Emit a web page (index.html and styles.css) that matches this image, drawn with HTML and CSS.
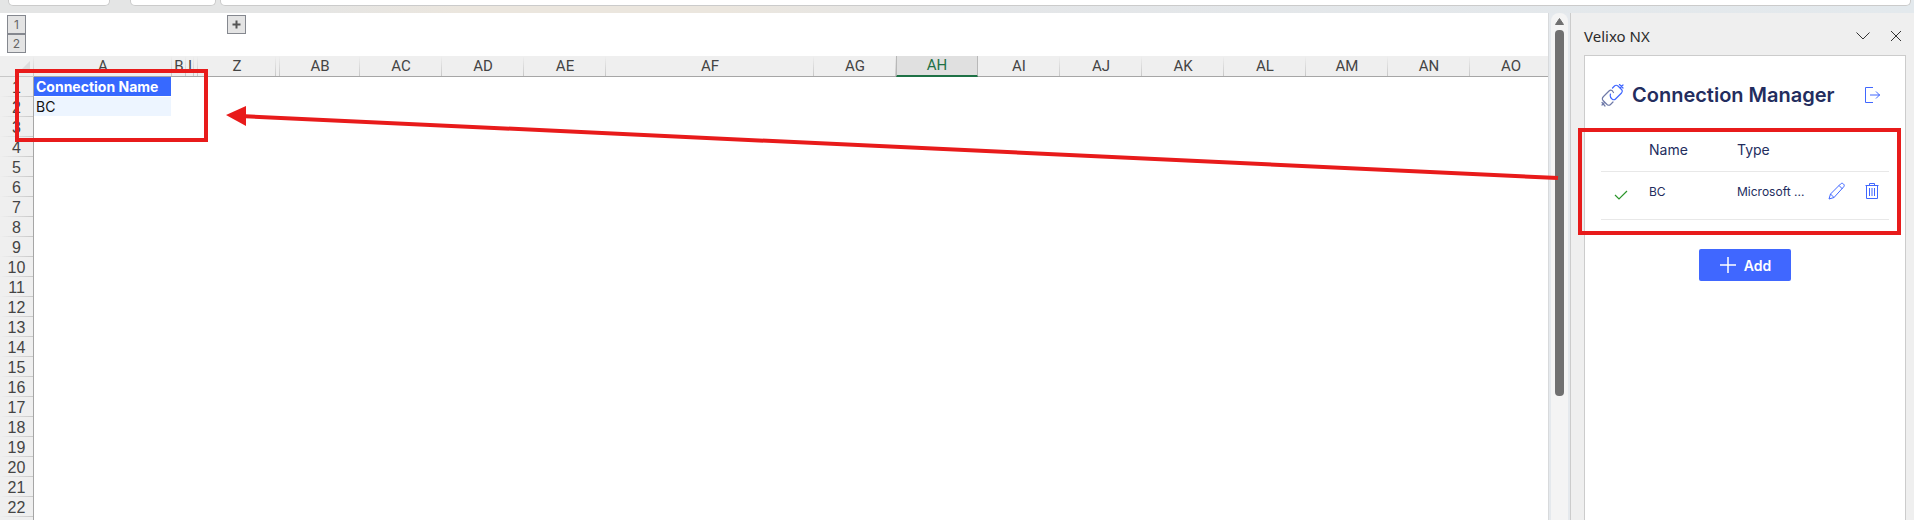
FILE: index.html
```
<!DOCTYPE html>
<html lang="en">
<head>
    <meta charset="UTF-8">
    <meta name="viewport" content="width=device-width, initial-scale=1.0">
    <title>Velixo NX - Connection Manager</title>
    <link rel="stylesheet" href="styles.css">
</head>
<body>
    <!-- bottom edge of the formula bar -->
    <div class="formula-bar">
        <div class="name-box"></div>
        <div class="fx-box"></div>
        <div class="formula-input"></div>
    </div>

    <div class="workspace">
        <main class="sheet">
            <div class="outline">
                <div class="levels">
                    <button>1</button>
                    <button>2</button>
                </div>
                <button class="expand" aria-label="Expand group">
                    <svg width="9" height="9" viewBox="0 0 9 9"><path d="M4.5 0.5v8M0.5 4.5h8" stroke="#555" stroke-width="2"/></svg>
                </button>
            </div>
            <table class="grid">
                <colgroup>
                    <col class="c-head"><col class="c-a"><col class="c-b"><col class="c-i"><col class="c-gap"><col class="c-z"><col class="c-gap"><col class="c-ab">
                    <col class="c-std"><col class="c-std"><col class="c-std"><col class="c-af"><col class="c-std"><col class="c-std"><col class="c-std"><col class="c-std"><col class="c-std"><col class="c-std"><col class="c-std"><col class="c-std"><col class="c-std">
                </colgroup>
                <thead>
                    <tr>
                        <th class="corner"><svg width="10" height="10" viewBox="0 0 10 10"><path d="M10 0v10H0z" fill="#dcdcdc"/></svg></th>
                        <th>A</th><th>B</th><th>I</th><th></th><th>Z</th><th></th><th>AB</th><th>AC</th><th>AD</th><th>AE</th><th>AF</th><th>AG</th><th class="active">AH</th><th>AI</th><th>AJ</th><th>AK</th><th>AL</th><th>AM</th><th>AN</th><th>AO</th>
                    </tr>
                </thead>
                <tbody>
                    <tr><th>1</th><td class="cell-title">Connection Name</td></tr>
                    <tr><th>2</th><td class="cell-value">BC</td></tr>
                    <tr><th>3</th></tr>
                    <tr><th>4</th></tr>
                    <tr><th>5</th></tr>
                    <tr><th>6</th></tr>
                    <tr><th>7</th></tr>
                    <tr><th>8</th></tr>
                    <tr><th>9</th></tr>
                    <tr><th>10</th></tr>
                    <tr><th>11</th></tr>
                    <tr><th>12</th></tr>
                    <tr><th>13</th></tr>
                    <tr><th>14</th></tr>
                    <tr><th>15</th></tr>
                    <tr><th>16</th></tr>
                    <tr><th>17</th></tr>
                    <tr><th>18</th></tr>
                    <tr><th>19</th></tr>
                    <tr><th>20</th></tr>
                    <tr><th>21</th></tr>
                    <tr><th>22</th></tr>
                    <tr><th></th></tr>
                </tbody>
            </table>
        </main>

        <div class="scroll">
            <div class="track">
                <svg width="9" height="7" viewBox="0 0 9 7"><path d="M4.5 0.5L8.5 6.5H0.5z" fill="#707070" stroke="#707070" stroke-linejoin="round"/></svg>
                <div class="thumb"></div>
            </div>
        </div>

        <aside class="pane">
            <div class="pane-header">
                <h2>Velixo NX</h2>
                <button aria-label="Pane options">
                    <svg width="14" height="14" viewBox="0 0 14 14"><path d="M0.5 3.5L7 10l6.5-6.5"/></svg>
                </button>
                <button aria-label="Close">
                    <svg width="12" height="12" viewBox="0 0 12 12"><path d="M1 1l10 10M11 1L1 11"/></svg>
                </button>
            </div>
            <div class="card">
                <div class="card-header">
                    <svg width="23" height="23" viewBox="0 0 23 23" fill="none" stroke-width="1.2" stroke-linecap="round">
                        <g stroke="#6f7aa8">
                            <path d="M12.500 8.500L11 6.500Q9.500 5.500 8 7L2.500 12.500Q.5 14.500 2 16.500L6 20.500Q8 22 9.500 20.500L12 18"/>
                            <path d="M3.500 18.500L1 21M1 18.500L4 22"/>
                        </g>
                        <g stroke="#4067ff">
                            <path d="M9.500 10Q8.500 13 11 15Q13 16.500 14.500 15L20.500 9Q22 7 20.500 5.500L17 2Q15 .5 13.500 2L11.500 4"/>
                            <path d="M19.500 3.500L22 1M18.500 .5L22 4"/>
                        </g>
                    </svg>
                    <h1>Connection Manager</h1>
                    <button aria-label="Sign out">
                        <svg width="16" height="16" viewBox="0 0 16 16"><path d="M8 0.500H0.500v15H8M5 8h10M11 4.500L14.500 8 11 11.500"/></svg>
                    </button>
                </div>
                <table class="connections">
                    <colgroup><col class="k-state"><col class="k-name"><col class="k-type"><col class="k-edit"><col class="k-delete"></colgroup>
                    <thead>
                        <tr><th></th><th>Name</th><th>Type</th><th></th><th></th></tr>
                    </thead>
                    <tbody>
                        <tr>
                            <td class="state"><svg width="14" height="10" viewBox="0 0 14 10"><path d="M1 5l4 4 8-8" fill="none" stroke="#2c962c" stroke-width="1.200"/></svg></td>
                            <td>BC</td>
                            <td>Microsoft ...</td>
                            <td class="action">
                                <button aria-label="Edit">
                                    <svg width="18" height="18" viewBox="0 0 18 18"><path d="M1 17l1.500-5L12.500 2c1-1 2-1 3 0s1 2 0 3L6 15.500zM2.500 12L6 15.500M11 3.500L14.500 7"/></svg>
                                </button>
                            </td>
                            <td class="action">
                                <button aria-label="Delete">
                                    <svg width="14" height="18" viewBox="0 0 14 18"><path d="M0.500 3.500h13M4.500 3.500v-2h5v2M1.500 3.500v13h11v-13M4.500 6v8M7 6v8M9.500 6v8"/></svg>
                                </button>
                            </td>
                        </tr>
                    </tbody>
                </table>
                <button class="add">
                    <svg width="18" height="18" viewBox="0 0 18 18"><path d="M9 1v16M1 9h16" stroke="#fff" stroke-width="1.500"/></svg>
                    Add
                </button>
            </div>
        </aside>
    </div>

    <!-- callouts drawn over the window -->
    <div class="callout callout-cell"></div>
    <div class="callout callout-list"></div>
    <svg class="arrow" width="1340" height="90" viewBox="0 0 1340 90">
        <path d="M20 16L1338 78" stroke="#e81b1b" stroke-width="4"/>
        <path d="M6 15L26 6v20z" fill="#e81b1b"/>
    </svg>
</body>
</html>
```
FILE: styles.css
```
* {
    box-sizing: border-box;
}

body {
    margin: 0;
    height: 100vh;
    display: flex;
    flex-direction: column;
    position: relative;
    overflow: hidden;
    background: #fff;
    font-family: Inter, sans-serif;
}

button {
    padding: 0;
    border: 0;
    background: none;
    font-family: inherit;
    display: flex;
    align-items: center;
    justify-content: center;
}

svg {
    display: block;
}

/* formula bar */
.formula-bar {
    flex: none;
    display: flex;
    height: 13px;
    padding: 0 3px 7px 8px;
    background: linear-gradient(90deg, #e4e5e5 0, #e4e5e5 15%, #ebe6de 24%, #ebe6de 38%, #e4e6e8 50%, #e3e9ed 100%);
}

.formula-bar div {
    background: #fff;
    border: 1px solid #cbcbcb;
    border-top: 0;
    border-radius: 0 0 5px 5px;
}

.name-box {
    width: 102px;
    margin-right: 20px;
}

.fx-box {
    width: 86px;
    margin-right: 4px;
}

.formula-input {
    flex: 1;
}

.workspace {
    flex: 1;
    min-height: 0;
    display: flex;
}

/* worksheet */
.sheet {
    flex: 1;
    min-width: 0;
    overflow: hidden;
}

.outline {
    display: flex;
    align-items: flex-start;
    height: 43px;
    padding: 2px 7px;
    gap: 201px;
}

.outline button {
    width: 19px;
    height: 19px;
    border: 1px solid #85888f;
    background: #e4e4e4;
    color: #666;
    font-size: 12px;
}

.grid {
    width: 1552px;
    table-layout: fixed;
    border-collapse: separate;
    border-spacing: 0;
    color: #444;
}

.grid th,
.grid td {
    height: 20px;
    padding: 0;
    line-height: 19px;
    font-weight: normal;
    white-space: nowrap;
}

.c-head { width: 34px; }
.c-a { width: 138px; }
.c-b { width: 14px; }
.c-i { width: 8px; }
.c-gap { width: 4px; }
.c-z { width: 78px; }
.c-ab { width: 80px; }
.c-std { width: 82px; }
.c-af { width: 208px; }

.grid thead th {
    height: 21px;
    border-bottom: 1px solid #a6a6a6;
    background: linear-gradient(#efefef, #c8c8c8) right / 1px 100% no-repeat #efefef;
    font-family: Roboto, sans-serif;
    font-size: 15px;
    line-height: 19px;
}

.grid thead .corner {
    padding: 5px 4px 5px 20px;
    border-bottom-color: #c8c8c8;
}

.grid thead .active {
    border-bottom: 2px solid #1e7145;
    border-left: 1px solid #b8b8b8;
    border-right: 1px solid #b8b8b8;
    background: #e0e0e0;
    color: #1e7145;
}

.grid tbody th {
    border-right: 1px solid #a6a6a6;
    background: linear-gradient(90deg, #efefef, #c8c8c8) bottom / 100% 1px no-repeat #efefef;
    font-family: "Liberation Sans", sans-serif;
    font-size: 16px;
}

.grid td {
    padding-left: 2px;
    border-bottom: 1px solid #fff;
    border-right: 1px solid #fff;
    font-size: 14px;
}

.grid .cell-title {
    background: #3769ff;
    background-clip: padding-box;
    color: #fff;
    font-size: 14px;
    font-weight: bold;
}

.grid .cell-value {
    background: #edf5ff;
    color: #111;
}

/* scroll bar */
.scroll {
    flex: none;
    width: 22px;
    padding: 0 2px;
    border-left: 1px solid #d8dadc;
    background: #e5e9ed;
}

.track {
    height: 100%;
    padding-top: 5px;
    border-radius: 8px 8px 0 0;
    background: #f4f4f4;
    display: flex;
    flex-direction: column;
    align-items: center;
    gap: 5px;
}

.thumb {
    width: 9px;
    height: 75%;
    max-height: 366px;
    border-radius: 4px;
    background: #707070;
}

/* task pane */
.pane {
    flex: none;
    width: 344px;
    padding: 0 8px 0 13px;
    border-left: 1px solid #ccc;
    background: #efefef;
    display: flex;
    flex-direction: column;
}

.pane-header {
    height: 42px;
    padding: 4px 4px 0 0;
    display: flex;
    align-items: center;
    gap: 20px;
}

.pane-header h2 {
    flex: 1;
    margin: 0;
    color: #2b2b2b;
    font-family: "Noto Sans", sans-serif;
    font-size: 15px;
    font-weight: normal;
}

.pane svg path {
    fill: none;
}

.pane-header svg {
    stroke: #333;
}

.card {
    flex: 1;
    padding: 16px;
    border: 1px solid #ccc;
    border-bottom: 0;
    background: #fff;
    color: #232d5e;
}

.card-header {
    height: 46px;
    display: flex;
    align-items: center;
    gap: 8px;
    margin-bottom: 10px;
    padding-right: 8px;
}

.card-header h1 {
    flex: 1;
    margin: 0;
    font-size: 20px;
    font-weight: 600;
    white-space: nowrap;
}

.card-header button,
.action button {
    stroke: #4067ff;
}

.connections {
    width: 100%;
    table-layout: fixed;
    border-spacing: 0;
}

.k-state { width: 48px; }
.k-name { width: 88px; }
.k-type { width: 82px; }
.k-edit { width: 36px; }

.connections th,
.connections td {
    padding: 0;
    border-bottom: 1px solid #e8e8e8;
    text-align: left;
    white-space: nowrap;
}

.connections th {
    height: 44px;
    font-size: 14px;
    font-weight: 400;
}

.connections td {
    height: 48px;
    padding-top: 10px;
    font-size: 12px;
    font-weight: 400;
    line-height: 20px;
    vertical-align: top;
}

.connections .state {
    padding: 18px 0 0 13px;
}

.action button {
    width: 100%;
}

.add {
    width: 92px;
    height: 32px;
    margin: 29px auto 0;
    gap: 7px;
    border-radius: 2px;
    background: #4067ff;
    color: #fff;
    font-size: 14px;
    font-weight: 600;
}

/* callouts */
.callout {
    position: absolute;
    border: 4px solid #e81b1b;
}

.callout-cell {
    left: 15px;
    top: 69px;
    width: 193px;
    height: 73px;
}

.callout-list {
    right: 13px;
    top: 128px;
    width: 323px;
    height: 107px;
}

.arrow {
    position: absolute;
    left: 220px;
    top: 100px;
}
```
